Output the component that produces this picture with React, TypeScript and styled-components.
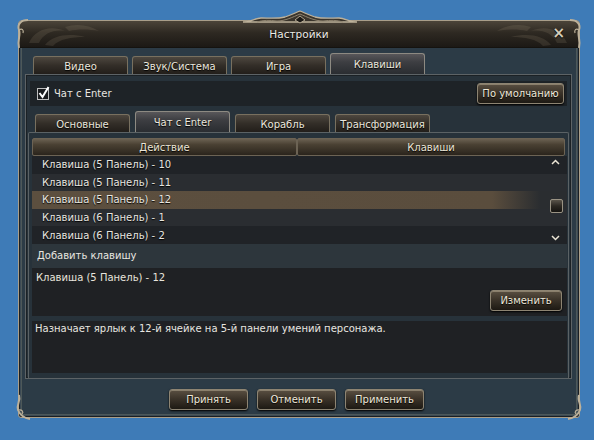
import { createGlobalStyle } from 'styled-components';
import styled from 'styled-components';

const GlobalStyle = createGlobalStyle`
  html, body {
    margin: 0;
    padding: 0;
    background: #3e7bb7;
  }
  body {
    font-family: 'DejaVu Sans', 'Noto Sans', sans-serif;
    font-size: 10px;
    color: #e8e4dc;
  }
`;

const Page = styled.div`
  width: 594px;
  height: 440px;
  padding: 20px 0 0 18px;
  box-sizing: border-box;
`;

const Window = styled.div`
  position: relative;
  width: 562px;
  height: 398px;
  box-sizing: border-box;
  display: flex;
  flex-direction: column;
  background: #2c3b46;
  border: 1px solid #a99e8a;
  border-radius: 4px 4px 3px 3px;
  box-shadow: inset 0 0 0 1px #1a1f23, inset 0 0 0 2px #3c4a54, inset 0 0 0 3px #4d5859;
`;

const TitleBar = styled.div`
  height: 26px;
  flex: none;
  display: flex;
  align-items: center;
  justify-content: center;
  background: linear-gradient(#4b4439 0%, #2e2922 45%, #1c1915 100%);
  border-bottom: 1px solid #15130f;
  border-radius: 3px 3px 0 0;
  color: #ecebe6;
  font-size: 10.5px;
  position: relative;
  text-shadow: 0 1px 1px #000;
  overflow: hidden;
`;

const Swirl = styled.svg`
  position: absolute;
  top: 0;
  opacity: 0.12;
`;

const Close = styled.div`
  position: absolute;
  right: 14px;
  top: 5px;
  color: #d6cdb8;
  font-size: 15px;
  font-weight: bold;
  line-height: 15px;
`;

const Body = styled.div`
  flex: 1;
  display: flex;
  flex-direction: column;
  padding: 5px 7px 0 6px;
`;

const TabRow = styled.div`
  display: flex;
  align-items: flex-end;
  gap: 4px;
  padding-left: 8px;
  height: 21px;
  flex: none;
`;

const Tab = styled.div<{ $active?: boolean }>`
  width: 95px;
  height: ${(p) => (p.$active ? 21 : 18)}px;
  box-sizing: border-box;
  display: flex;
  align-items: center;
  justify-content: center;
  border: 1px solid ${(p) => (p.$active ? '#8d8a82' : '#78705f')};
  border-bottom: none;
  border-radius: 3px 3px 0 0;
  background: ${(p) =>
    p.$active
      ? 'linear-gradient(#58575a 0%, #3d3e42 40%, #2a2d31 100%)'
      : 'linear-gradient(#4d473f 0%, #332e28 50%, #221e1a 100%)'};
  color: #ebe7de;
  text-shadow: 0 1px 1px #000;
  padding-top: ${(p) => (p.$active ? 1 : 2)}px;
`;

const Panel = styled.div`
  border: 1px solid #5d6366;
  box-shadow: inset 0 0 0 1px #1b2125;
  background: #27323a;
  padding: 6px 2px 0 2px;
  height: 305px;
  flex: none;
  box-sizing: border-box;
  display: flex;
  flex-direction: column;
`;

const TopBar = styled.div`
  height: 25px;
  flex: none;
  margin: 0 2px;
  background: #1e2327;
  display: flex;
  align-items: center;
  justify-content: space-between;
  padding: 0 3px 0 7px;
`;

const CheckLabel = styled.label`
  display: flex;
  align-items: center;
  gap: 5px;
  color: #e8e6e0;
`;

const Box = styled.span`
  width: 10px;
  height: 10px;
  border: 1px solid #bfbfbf;
  background: #1a1c1e;
  position: relative;
  display: inline-block;
`;

const Button = styled.button<{ $w?: number }>`
  width: ${(p) => p.$w ?? 79}px;
  height: 21px;
  box-sizing: border-box;
  border: 1px solid #8d8472;
  border-radius: 3px;
  background: linear-gradient(#5a5042 0%, #3c342a 45%, #1d1913 100%);
  box-shadow: inset 0 1px 0 #8a7f6c, 0 1px 2px #000;
  color: #eee8da;
  font-family: 'DejaVu Sans', 'Noto Sans', sans-serif;
  font-size: 10px;
  text-shadow: 0 1px 1px #000;
  padding: 0;
`;

const SubTabRow = styled(TabRow)`
  margin-top: 5px;
  padding-left: 7px;
  gap: 5px;
`;

const TablePanel = styled.div`
  flex: 1;
  border: 1px solid #5b6265;
  border-bottom: none;
  border-radius: 2px 2px 0 0;
  padding: 5px 1px 0 3px;
  display: flex;
  flex-direction: column;
  background: #27323a;
`;

const Header = styled.div`
  display: grid;
  grid-template-columns: 265px 1fr;
  height: 18px;
  flex: none;
  margin-right: 2px;
`;

const HeadCell = styled.div`
  display: flex;
  align-items: center;
  justify-content: center;
  border: 1px solid #6c6354;
  border-radius: 2px;
  background: linear-gradient(#6b6152 0%, #4a4133 35%, #2a241c 100%);
  color: #ebe5d7;
  text-shadow: 0 1px 1px #000;
`;

const List = styled.div`
  position: relative;
  display: flex;
  flex-direction: column;
`;

const Row = styled.div<{ $odd?: boolean; $sel?: boolean }>`
  height: 17.6px;
  display: flex;
  align-items: center;
  padding-left: 10px;
  background: ${(p) =>
    p.$sel
      ? 'linear-gradient(90deg, #5c4f3f 0%, #5a4d3d 86%, #2a2d30 95%)'
      : p.$odd
      ? '#202327'
      : '#2a2d31'};
  color: #e8e6e0;
  text-shadow: 0 1px 1px #000;
`;

const ScrollArrow = styled.div<{ $top: number }>`
  position: absolute;
  right: 7px;
  top: ${(p) => p.$top}px;
  width: 9px;
  height: 6px;
  display: flex;
`;

const Thumb = styled.div`
  position: absolute;
  right: 4px;
  top: 43px;
  width: 13px;
  height: 14px;
  box-sizing: border-box;
  border: 1px solid #9a9384;
  border-radius: 2px;
  background: linear-gradient(#5a544a 0%, #2c2822 50%, #151310 100%);
`;

const AddRow = styled.div`
  height: 24px;
  flex: none;
  display: flex;
  align-items: center;
  padding-left: 5px;
  background: #2d363c;
  color: #e8e6e0;
`;

const Detail = styled.div`
  height: 48px;
  flex: none;
  box-sizing: border-box;
  background: #1f2124;
  padding: 4px 5px 5px 4px;
  display: flex;
  flex-direction: column;
  justify-content: space-between;
`;

const DetailFoot = styled.div`
  display: flex;
  justify-content: flex-end;
`;

const Desc = styled.div`
  margin: 5px 0 5px;
  flex: 1;
  background: #1f2124;
  padding: 2px 3px;
  color: #e8e6e0;
`;

const Footer = styled.div`
  flex: 1;
  display: flex;
  justify-content: center;
  align-items: flex-start;
  padding: 10px 4px 0 0;
  gap: 9px;
`;

const Ornament = styled.svg`
  position: absolute;
  pointer-events: none;
  overflow: visible;
`;

const rows = [
  'Клавиша (5 Панель) - 10',
  'Клавиша (5 Панель) - 11',
  'Клавиша (5 Панель) - 12',
  'Клавиша (6 Панель) - 1',
  'Клавиша (6 Панель) - 2',
];

const frame = '#bdb19a';

export default function App() {
  return (
    <Page>
      <GlobalStyle />
      <Window>
        <TitleBar>
          <Swirl style={{ left: 6 }} width="80" height="26" viewBox="0 0 80 26">
            <path d="M4 22 C10 8 26 4 40 10 C30 8 18 12 14 22 Z" fill="#c9b89a" />
            <path d="M20 24 C28 14 44 12 60 16 C46 16 34 18 28 25 Z" fill="#c9b89a" />
            <path d="M40 6 C52 2 64 4 74 10 C64 8 52 8 44 10 Z" fill="#c9b89a" />
          </Swirl>
          <Swirl style={{ right: 8 }} width="80" height="26" viewBox="0 0 80 26">
            <path d="M76 22 C70 8 54 4 40 10 C50 8 62 12 66 22 Z" fill="#c9b89a" />
            <path d="M60 24 C52 14 36 12 20 16 C34 16 46 18 52 25 Z" fill="#c9b89a" />
            <path d="M40 6 C28 2 16 4 6 10 C16 8 28 8 36 10 Z" fill="#c9b89a" />
          </Swirl>
          Настройки
          <Close>×</Close>
        </TitleBar>
        <Ornament style={{ left: 224, top: -10 }} width="114" height="14" viewBox="0 0 114 14">
          <path
            d="M0 11 C8 11 12 7 18 7 C26 7 34 8 42 6 C48 4 52 2 57 0 C62 2 66 4 72 6 C80 8 88 7 96 7 C102 7 106 11 114 11 Z"
            fill="#3a342b"
            stroke={frame}
            strokeWidth="1.3"
          />
          <path
            d="M14 11 C20 9 26 9 34 10 C42 10 50 6 57 3 C64 6 72 10 80 10 C88 9 94 9 100 11"
            fill="none"
            stroke="#8f8470"
            strokeWidth="1"
          />
          <path d="M52 9 L57 5 L62 9 L57 12 Z" fill="#1d1a16" stroke={frame} strokeWidth="0.9" />
        </Ornament>
        <Ornament style={{ left: -3, top: -3 }} width="14" height="34" viewBox="0 0 14 34">
          <path d="M12 2 C5 2 1 6 3 12 C5 17 1 22 3 30" fill="none" stroke={frame} strokeWidth="2" />
          <path d="M3 12 C6 10 8 12 7 15" fill="none" stroke={frame} strokeWidth="1.2" />
        </Ornament>
        <Ornament style={{ right: -3, top: -3 }} width="14" height="34" viewBox="0 0 14 34">
          <path d="M2 2 C9 2 13 6 11 12 C9 17 13 22 11 30" fill="none" stroke={frame} strokeWidth="2" />
          <path d="M11 12 C8 10 6 12 7 15" fill="none" stroke={frame} strokeWidth="1.2" />
        </Ornament>
        <Ornament style={{ left: -4, bottom: -4 }} width="16" height="26" viewBox="0 0 16 26">
          <path d="M4 0 C6 6 1 10 3 15 C5 20 8 23 15 24" fill="none" stroke={frame} strokeWidth="2" />
          <path d="M3 15 C7 14 9 17 7 19" fill="none" stroke={frame} strokeWidth="1.2" />
        </Ornament>
        <Ornament style={{ right: -4, bottom: -4 }} width="16" height="26" viewBox="0 0 16 26">
          <path d="M12 0 C10 6 15 10 13 15 C11 20 8 23 1 24" fill="none" stroke={frame} strokeWidth="2" />
          <path d="M13 15 C9 14 7 17 9 19" fill="none" stroke={frame} strokeWidth="1.2" />
        </Ornament>
        <Body>
          <TabRow>
            <Tab>Видео</Tab>
            <Tab>Звук/Система</Tab>
            <Tab>Игра</Tab>
            <Tab $active>Клавиши</Tab>
          </TabRow>
          <Panel>
            <TopBar>
              <CheckLabel>
                <Box>
                  <svg width="12" height="13" viewBox="0 0 12 13" style={{ position: 'absolute', left: 0, top: -3 }}>
                    <path d="M1.5 7 L4.5 11 L10.5 1" fill="none" stroke="#fff" strokeWidth="2" />
                  </svg>
                </Box>
                Чат с Enter
              </CheckLabel>
              <Button $w={87}>По умолчанию</Button>
            </TopBar>
            <SubTabRow>
              <Tab>Основные</Tab>
              <Tab $active>Чат с Enter</Tab>
              <Tab>Корабль</Tab>
              <Tab>Трансформация</Tab>
            </SubTabRow>
            <TablePanel>
              <Header>
                <HeadCell>Действие</HeadCell>
                <HeadCell>Клавиши</HeadCell>
              </Header>
              <List>
                {rows.map((r, i) => (
                  <Row key={r} $odd={i % 2 === 0} $sel={i === 2}>
                    {r}
                  </Row>
                ))}
                <ScrollArrow $top={3}>
                  <svg width="9" height="6" viewBox="0 0 9 6">
                    <path d="M1 5 L4.5 1.5 L8 5" fill="none" stroke="#ece6d6" strokeWidth="1.5" />
                  </svg>
                </ScrollArrow>
                <Thumb />
                <ScrollArrow $top={79}>
                  <svg width="9" height="6" viewBox="0 0 9 6">
                    <path d="M1 1 L4.5 4.5 L8 1" fill="none" stroke="#ece6d6" strokeWidth="1.5" />
                  </svg>
                </ScrollArrow>
              </List>
              <AddRow>Добавить клавишу</AddRow>
              <Detail>
                <div>Клавиша (5 Панель) - 12</div>
                <DetailFoot>
                  <Button $w={72}>Изменить</Button>
                </DetailFoot>
              </Detail>
              <Desc>Назначает ярлык к 12-й ячейке на 5-й панели умений персонажа.</Desc>
            </TablePanel>
          </Panel>
          <Footer>
            <Button>Принять</Button>
            <Button>Отменить</Button>
            <Button>Применить</Button>
          </Footer>
        </Body>
      </Window>
    </Page>
  );
}
